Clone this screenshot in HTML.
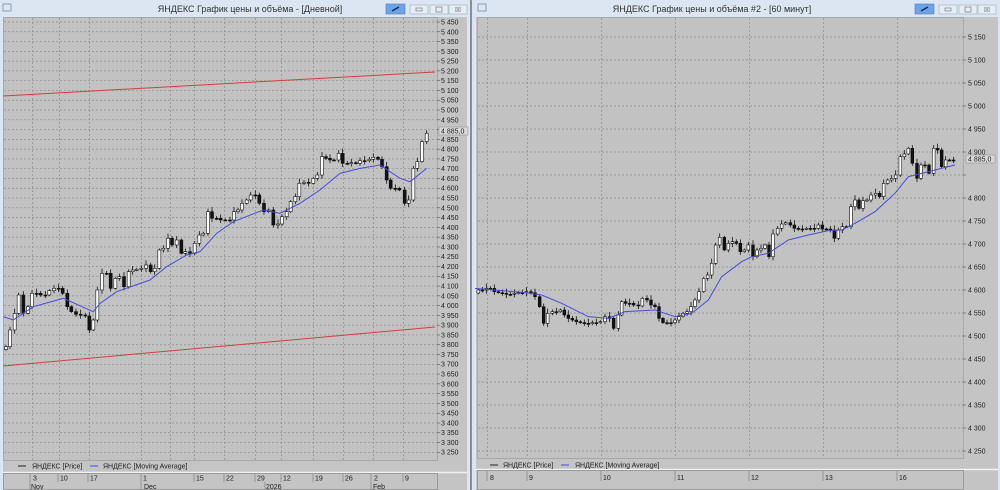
<!DOCTYPE html>
<html><head><meta charset="utf-8">
<style>
html,body{margin:0;padding:0;background:#d9e5f2;width:1000px;height:490px;overflow:hidden}
svg{position:absolute;left:0;top:0;font-family:"Liberation Sans","DejaVu Sans",sans-serif}
.ax{font-size:7px;fill:#222}
.tt{font-size:9px;fill:#333}
.lg{font-size:7px;fill:#222}
</style></head><body>
<svg id="s" width="1000" height="490" viewBox="0 0 1000 490" xmlns="http://www.w3.org/2000/svg">
<!-- frames -->
<rect x="0" y="0" width="469" height="490" fill="#dbe6f2"/>
<rect x="474" y="0" width="526" height="490" fill="#dbe6f2"/>
<line x1="471" y1="0" x2="471" y2="490" stroke="#555" stroke-width="1.2"/>
<!-- left window -->
<rect x="3" y="17" width="464" height="473" fill="#c4c4c4"/>
<rect x="3.5" y="17.5" width="434" height="443" fill="#c2c2c2" stroke="#a8a8a8"/>
<line x1="3" y1="472.5" x2="467" y2="472.5" stroke="#f2f2f2" stroke-width="1.5"/>
<rect x="3.5" y="473.5" width="434" height="16" fill="#c4c4c4" stroke="#9a9a9a"/>
<!-- right window -->
<rect x="476" y="17" width="522" height="473" fill="#c4c4c4"/>
<rect x="477.5" y="17.5" width="486" height="441" fill="#c2c2c2" stroke="#a8a8a8"/>
<line x1="476" y1="469.5" x2="998" y2="469.5" stroke="#f2f2f2" stroke-width="1.5"/>
<rect x="477.5" y="470.5" width="486" height="19" fill="#c4c4c4" stroke="#9a9a9a"/>
<g id="grid"></g>
<!-- red trend lines -->
<line x1="3" y1="96" x2="435" y2="72" stroke="#d04040" stroke-width="1"/>
<line x1="3" y1="366" x2="435" y2="327" stroke="#d04040" stroke-width="1"/>
<g id="cand"></g>
<polyline id="ma1" fill="none" stroke="#4a4ad8" stroke-width="1"/>
<polyline id="ma2" fill="none" stroke="#4a4ad8" stroke-width="1"/>
<!-- titles -->
<rect x="3" y="4" width="8" height="7" fill="none" stroke="#7a8aa0" stroke-width="0.8"/>
<text class="tt" x="250" y="12" text-anchor="middle">ЯНДЕКС График цены и объёма - [Дневной]</text>
<rect x="386" y="4" width="19" height="10" fill="#6fa3e8" stroke="#4a7cc0" stroke-width="0.6"/>
<line x1="392" y1="11" x2="399" y2="7" stroke="#1a2a50" stroke-width="1.5"/>
<rect x="410" y="5" width="18" height="9" fill="#e6edf5" stroke="#9aaabb" stroke-width="0.6"/>
<rect x="416" y="8" width="6" height="3" fill="none" stroke="#667" stroke-width="0.6"/>
<rect x="430" y="5" width="18" height="9" fill="#e6edf5" stroke="#9aaabb" stroke-width="0.6"/>
<rect x="436" y="7" width="6" height="5" fill="none" stroke="#667" stroke-width="0.6"/>
<rect x="449" y="5" width="18" height="9" fill="#e6edf5" stroke="#9aaabb" stroke-width="0.6"/>
<text x="458" y="12" font-size="7" text-anchor="middle" fill="#667">☒</text>

<rect x="478" y="4" width="8" height="7" fill="none" stroke="#7a8aa0" stroke-width="0.8"/>
<text class="tt" x="712" y="12" text-anchor="middle">ЯНДЕКС График цены и объёма #2 - [60 минут]</text>
<rect x="915" y="4" width="19" height="10" fill="#6fa3e8" stroke="#4a7cc0" stroke-width="0.6"/>
<line x1="921" y1="11" x2="928" y2="7" stroke="#1a2a50" stroke-width="1.5"/>
<rect x="939" y="5" width="18" height="9" fill="#e6edf5" stroke="#9aaabb" stroke-width="0.6"/>
<rect x="945" y="8" width="6" height="3" fill="none" stroke="#667" stroke-width="0.6"/>
<rect x="959" y="5" width="18" height="9" fill="#e6edf5" stroke="#9aaabb" stroke-width="0.6"/>
<rect x="965" y="7" width="6" height="5" fill="none" stroke="#667" stroke-width="0.6"/>
<rect x="978" y="5" width="18" height="9" fill="#e6edf5" stroke="#9aaabb" stroke-width="0.6"/>
<text x="987" y="12" font-size="7" text-anchor="middle" fill="#667">☒</text>

<!-- left axis labels -->
<g class="ax">
<text x="441" y="24.5">5 450</text><text x="441" y="34.3">5 400</text><text x="441" y="44.1">5 350</text><text x="441" y="53.8">5 300</text><text x="441" y="63.6">5 250</text><text x="441" y="73.4">5 200</text><text x="441" y="83.2">5 150</text><text x="441" y="93">5 100</text><text x="441" y="102.7">5 050</text><text x="441" y="112.5">5 000</text><text x="441" y="122.3">4 950</text><text x="441" y="142">4 850</text><text x="441" y="151.6">4 800</text><text x="441" y="161.4">4 750</text><text x="441" y="171.2">4 700</text><text x="441" y="181">4 650</text><text x="441" y="190.7">4 600</text><text x="441" y="200.5">4 550</text><text x="441" y="210.3">4 500</text><text x="441" y="220">4 450</text><text x="441" y="229.8">4 400</text><text x="441" y="239.6">4 350</text><text x="441" y="249.4">4 300</text><text x="441" y="259.2">4 250</text><text x="441" y="268.9">4 200</text><text x="441" y="278.7">4 150</text><text x="441" y="288.5">4 100</text><text x="441" y="298.3">4 050</text><text x="441" y="308">4 000</text><text x="441" y="317.8">3 950</text><text x="441" y="327.6">3 900</text><text x="441" y="337.4">3 850</text><text x="441" y="347.2">3 800</text><text x="441" y="356.9">3 750</text><text x="441" y="366.7">3 700</text><text x="441" y="376.5">3 650</text><text x="441" y="386.3">3 600</text><text x="441" y="396">3 550</text><text x="441" y="405.8">3 500</text><text x="441" y="415.6">3 450</text><text x="441" y="425.4">3 400</text><text x="441" y="435.2">3 350</text><text x="441" y="444.9">3 300</text><text x="441" y="454.7">3 250</text>
</g>
<rect x="439" y="127" width="29" height="8" fill="#d8d8d8" stroke="#888" stroke-width="0.5"/>
<text class="ax" x="441" y="133.5">4 885,0</text>
<!-- right axis labels -->
<g class="ax">
<text x="968" y="39.5">5 150</text><text x="968" y="62.5">5 100</text><text x="968" y="85.5">5 050</text><text x="968" y="108.5">5 000</text><text x="968" y="131.5">4 950</text><text x="968" y="154.5">4 900</text><text x="968" y="200.5">4 800</text><text x="968" y="223.5">4 750</text><text x="968" y="246.5">4 700</text><text x="968" y="269.5">4 650</text><text x="968" y="292.5">4 600</text><text x="968" y="315.5">4 550</text><text x="968" y="338.5">4 500</text><text x="968" y="361.5">4 450</text><text x="968" y="384.5">4 400</text><text x="968" y="407.5">4 350</text><text x="968" y="430.5">4 300</text><text x="968" y="453.5">4 250</text>
</g>
<rect x="966" y="155" width="29" height="8" fill="#d8d8d8" stroke="#888" stroke-width="0.5"/>
<text class="ax" x="968" y="161.5">4 885,0</text>
<!-- legends -->
<line x1="18" y1="466" x2="26" y2="466" stroke="#222"/>
<text class="lg" x="32" y="468.5">ЯНДЕКС [Price]</text>
<line x1="90" y1="466" x2="98" y2="466" stroke="#4a4ad8"/>
<text class="lg" x="103" y="468.5">ЯНДЕКС [Moving Average]</text>
<line x1="490" y1="465" x2="498" y2="465" stroke="#222"/>
<text class="lg" x="503" y="467.5">ЯНДЕКС [Price]</text>
<line x1="561" y1="465" x2="569" y2="465" stroke="#4a4ad8"/>
<text class="lg" x="575" y="467.5">ЯНДЕКС [Moving Average]</text>
<!-- date axes -->
<g stroke="#777" stroke-width="0.6">
<line x1="30" y1="474" x2="30" y2="490"/><line x1="58" y1="474" x2="58" y2="482"/><line x1="88" y1="474" x2="88" y2="482"/><line x1="141" y1="474" x2="141" y2="490"/><line x1="194" y1="474" x2="194" y2="482"/><line x1="224" y1="474" x2="224" y2="482"/><line x1="255" y1="474" x2="255" y2="482"/><line x1="265" y1="482" x2="265" y2="490"/><line x1="281" y1="474" x2="281" y2="482"/><line x1="313" y1="474" x2="313" y2="482"/><line x1="343" y1="474" x2="343" y2="482"/><line x1="371" y1="474" x2="371" y2="490"/><line x1="403" y1="474" x2="403" y2="482"/>
<line x1="487" y1="471" x2="487" y2="481"/><line x1="527" y1="471" x2="527" y2="481"/><line x1="601" y1="471" x2="601" y2="481"/><line x1="675" y1="471" x2="675" y2="481"/><line x1="749" y1="471" x2="749" y2="481"/><line x1="823" y1="471" x2="823" y2="481"/><line x1="897" y1="471" x2="897" y2="481"/>
</g>
<g class="ax">
<text x="33" y="480.5">3</text><text x="60" y="480.5">10</text><text x="90" y="480.5">17</text><text x="143" y="480.5">1</text><text x="196" y="480.5">15</text><text x="226" y="480.5">22</text><text x="257" y="480.5">29</text><text x="283" y="480.5">12</text><text x="315" y="480.5">19</text><text x="345" y="480.5">26</text><text x="374" y="480.5">2</text><text x="405" y="480.5">9</text>
<text x="31" y="489">Nov</text><text x="144" y="489">Dec</text><text x="266" y="489">2026</text><text x="373" y="489">Feb</text>
<text x="490" y="480">8</text><text x="529" y="480">9</text><text x="603" y="480">10</text><text x="677" y="480">11</text><text x="751" y="480">12</text><text x="825" y="480">13</text><text x="899" y="480">16</text>
</g>
</svg>
<script>
var NS="http://www.w3.org/2000/svg";
function el(p,t,a){var e=document.createElementNS(NS,t);for(var k in a)e.setAttribute(k,a[k]);p.appendChild(e);return e;}
var g=document.getElementById("grid");
// left grid
[32,59,89,141,170,194,224,255,281,313,343,373,403].forEach(function(x){el(g,"line",{x1:x+.5,y1:18,x2:x+.5,y2:460,stroke:"#8c8c8c","stroke-dasharray":"2,2","stroke-width":.7});});
for(var i=0;i<45;i++){var y=22+i*9.78;el(g,"line",{x1:4,y1:y,x2:437,y2:y,stroke:"#8c8c8c","stroke-dasharray":"2,2","stroke-width":.7});el(g,"line",{x1:437,y1:y,x2:440,y2:y,stroke:"#555","stroke-width":.6});}
// right grid
[487,527,601,675,749,823,897].forEach(function(x){el(g,"line",{x1:x+.5,y1:18,x2:x+.5,y2:458,stroke:"#8c8c8c","stroke-dasharray":"2,2","stroke-width":.7});});
for(var i=0;i<19;i++){var y=37+i*23;el(g,"line",{x1:478,y1:y,x2:963,y2:y,stroke:"#8c8c8c","stroke-dasharray":"2,2","stroke-width":.7});el(g,"line",{x1:963,y1:y,x2:966,y2:y,stroke:"#555","stroke-width":.6});}
var c=document.getElementById("cand");
function candles(data,ox,oy,bw){
  var prev=null;
  data.forEach(function(d,i){
    var x=ox+d[0]/3,cl=oy+d[1]/3,op=prev===null?cl+3:prev;prev=cl;
    var w=1.5+((i*7)%5)*0.8;
    var top=Math.min(op,cl),bot=Math.max(op,cl);
    el(c,"line",{x1:x,y1:top-w,x2:x,y2:bot+w*0.8,stroke:"#111","stroke-width":.8});
    var h=Math.max(bot-top,1);
    el(c,"rect",{x:x-bw/2,y:top,width:bw,height:h,fill:cl<op?"#ffffff":"#111",stroke:"#111","stroke-width":.6});
  });
}
var L=[[18,680],[30,630],[44,580],[56,525],[70,580],[84,560],[96,520],[110,520],[122,525],[136,525],[148,512],[162,505],[176,505],[188,520],[202,560],[214,575],[228,583],[242,585],[256,588],[268,630],[280,600],[292,510],[306,460],[320,460],[332,505],[346,475],[358,470],[372,500],[386,455],[398,450],[410,448],[424,445],[438,435],[452,455],[464,445],[478,390],[490,385],[504,355],[516,375],[530,360],[544,400],[556,395],[570,400],[584,370],[598,345],[610,340],[624,275],[636,295],[650,295],[662,300],[676,300],[690,300],[702,275],[714,270],[726,250],[740,240],[752,225],[766,225],[778,250],[792,275],[806,270],[820,315],[834,312],[846,290],[860,275],[872,245],[886,230],[898,190],[912,187],[926,190],[940,175],[952,165],[966,110],[978,115],[990,120],[1002,120],[1016,100],[1028,130],[1042,130],[1054,128],[1068,130],[1080,122],[1094,122],[1108,118],[1120,112],[1134,118],[1146,140],[1160,180],[1172,205],[1186,205],[1198,210],[1214,250],[1226,240],[1240,145],[1252,125],[1266,65],[1280,40]];
candles(L,0,120,3);
var R=[[10,480],[22,480],[34,475],[46,475],[58,485],[70,488],[82,490],[94,493],[106,493],[118,490],[130,488],[142,488],[154,485],[168,488],[180,500],[194,530],[206,580],[218,550],[232,545],[244,545],[256,540],[268,555],[280,565],[292,570],[304,575],[316,578],[328,580],[340,580],[352,578],[364,578],[376,575],[390,560],[404,565],[416,595],[430,555],[440,515],[452,520],[464,520],[476,525],[490,528],[502,505],[516,510],[528,525],[540,530],[552,565],[564,578],[576,578],[588,578],[600,570],[612,560],[624,550],[636,545],[648,530],[660,510],[672,485],[686,445],[698,435],[710,400],[722,345],[734,322],[748,360],[760,340],[772,335],[784,340],[796,365],[808,360],[820,345],[834,380],[846,360],[858,355],[870,345],[882,380],[894,312],[908,295],[920,282],[932,278],[946,285],[958,295],[970,297],[982,297],[994,295],[1006,295],[1018,295],[1030,285],[1042,297],[1054,297],[1066,300],[1078,325],[1090,300],[1102,290],[1114,290],[1128,230],[1140,210],[1152,235],[1164,212],[1176,210],[1188,195],[1202,190],[1214,200],[1226,160],[1238,150],[1250,145],[1262,135],[1276,80],[1288,72],[1300,55],[1312,100],[1326,145],[1338,105],[1350,105],[1362,130],[1376,55],[1388,60],[1400,110],[1412,90],[1424,90],[1436,92]];
candles(R,475,130,2.8);
function pl(id,pts,ox,oy){document.getElementById(id).setAttribute("points",pts.map(function(p){return (ox+p[0]/3)+","+(oy+p[1]/3);}).join(" "));}
pl("ma1",[[10,590],[40,600],[100,560],[190,535],[280,575],[300,550],[350,515],[450,480],[500,440],[560,405],[600,395],[650,340],[700,305],[790,270],[840,280],[900,250],[960,210],[1020,160],[1080,145],[1140,135],[1200,175],[1230,185],[1280,145]],0,120);
pl("ma2",[[0,475],[150,488],[200,495],[260,520],[340,560],[400,565],[450,545],[540,540],[600,560],[650,550],[700,510],[740,440],[800,395],[830,380],[880,370],[940,330],[1000,315],[1060,302],[1100,300],[1140,280],[1200,245],[1260,190],[1300,140],[1340,130],[1380,120],[1440,105]],475,130);
</script>
</body></html>
